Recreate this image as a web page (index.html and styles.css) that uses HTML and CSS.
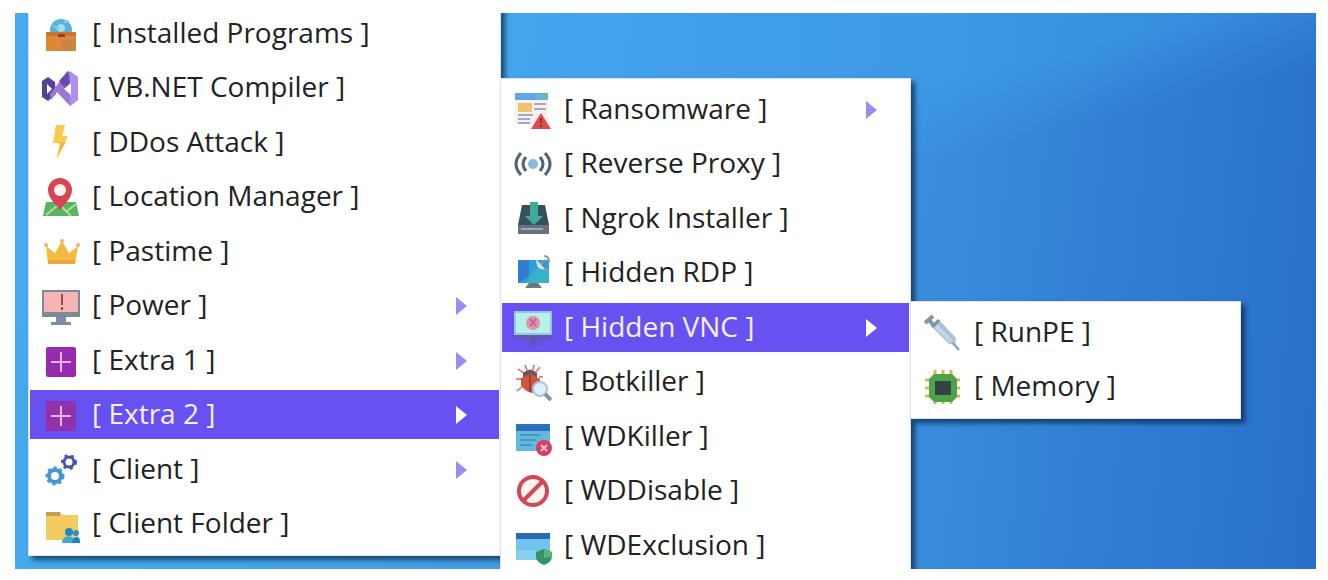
FILE: index.html
```html
<!DOCTYPE html>
<html lang="en">

<head>
    <meta charset="UTF-8">
    <title>Context menu</title>
    <link rel="stylesheet" href="styles.css">
</head>

<body>
    <div class="desktop">
        <ul class="menu menu-main">
            <li><button class="item">
                <svg class="icon" viewBox="0 0 38 38"><circle cx="19" cy="15" r="11" fill="#55b4d6"/><circle cx="19" cy="13" r="4" fill="#a5dbea"/><path d="M11 11l6 2M22 7l5-1" stroke="#8bd0e5" stroke-width="2"/><path d="M4 17h30v19H4z" fill="#dc883c"/><path d="M4 17h30v4H4z" fill="#c9762f"/><path d="M16 19h7v3h-7z" fill="#963b31"/><path d="M20 25h14v11H20z" fill="#c98641"/></svg>
                <span>[ Installed Programs ]</span></button></li>
            <li><button class="item">
                <svg class="icon" viewBox="0 0 38 38"><path d="M0 12l6-4 7 5 1 12-8 7-6-4z" fill="#574195"/><path d="M5 15v10l5-5z" fill="#fff"/><path d="M8 25L26 2l10 6v23l-8 6-13-14-6 8z" fill="#9b78d5"/><path d="M26 2l-9 10 6 7 5-5z" fill="#674bac"/><path d="M36 8v23l-8 6V2z" fill="#af91ed"/><path d="M29 14v12l-7-6z" fill="#fff"/></svg>
                <span>[ VB.NET Compiler ]</span></button></li>
            <li><button class="item">
                <svg class="icon" viewBox="0 0 38 38"><path d="M14 1h9l-3 11h6L15 34l3-15h-7z" fill="#f9cb4b"/><path d="M15 18h9l-9 16 3-14z" fill="#f2b646"/></svg>
                <span>[ DDos Attack ]</span></button></li>
            <li><button class="item">
                <svg class="icon" viewBox="0 0 38 38"><path d="M4 24h30l3 14H1z" fill="#57b565"/><path d="M4 37l13-11 12 12" fill="none" stroke="#b9dd9c" stroke-width="2"/><path d="M25 33l9-7" stroke="#b2df98" stroke-width="2"/><path d="M18 32C13 25 6 20 6 12a12 12 0 0 1 24 0c0 8-7 13-12 20z" fill="#d84452"/><circle cx="18" cy="12" r="6" fill="#fff2ef"/></svg>
                <span>[ Location Manager ]</span></button></li>
            <li><button class="item">
                <svg class="icon" viewBox="0 0 38 38"><path d="M6 31L4 13l9 7 7-12 7 12 9-7-3 18z" fill="#f4bb43"/><path d="M6 27h27v4H6z" fill="#e9a83b"/><g fill="#e6b469"><circle cx="4" cy="12" r="2"/><circle cx="20" cy="8" r="2"/><circle cx="36" cy="12" r="2"/></g></svg>
                <span>[ Pastime ]</span></button></li>
            <li><button class="item">
                <svg class="icon" viewBox="0 0 38 38"><path d="M0 3h38v27H0z" fill="#7e8996"/><path d="M2 5h34v20H2z" fill="#f7b4b5"/><path d="M14 30h10v5h5v3H9v-3h5z" fill="#778fa4"/><path d="M20 7v11M20 20v3" stroke="#96484f" stroke-width="2"/></svg>
                <span>[ Power ]</span><i class="arrow"></i></button></li>
            <li><button class="item">
                <svg class="icon" viewBox="0 0 38 38"><rect x="4" y="5" width="30" height="30" rx="2" fill="#962bb0"/><path d="M9 20h20M19 10v20" stroke="#e7b5ec" stroke-width="2"/></svg>
                <span>[ Extra 1 ]</span><i class="arrow"></i></button></li>
            <li><button class="item active">
                <svg class="icon" viewBox="0 0 38 38"><rect x="4" y="5" width="30" height="30" rx="2" fill="#9231aa"/><path d="M9 20h20M19 10v20" stroke="#e7b5ec" stroke-width="2"/></svg>
                <span>[ Extra 2 ]</span><i class="arrow"></i></button></li>
            <li><button class="item">
                <svg class="icon" viewBox="0 0 38 38"><circle cx="13" cy="25" r="6" fill="none" stroke="#4397d8" stroke-width="4"/><circle cx="13" cy="25" r="8" fill="none" stroke="#4397d8" stroke-width="3" stroke-dasharray="3 3"/><circle cx="27" cy="11" r="5" fill="none" stroke="#4854a3" stroke-width="3"/><circle cx="27" cy="11" r="7" fill="none" stroke="#4854a3" stroke-width="2" stroke-dasharray="3 4"/></svg>
                <span>[ Client ]</span><i class="arrow"></i></button></li>
            <li><button class="item">
                <svg class="icon" viewBox="0 0 38 38"><path d="M4 7h14l3 3h15v25H4z" fill="#f4cb61"/><path d="M4 7h14v4H4z" fill="#c49c58"/><circle cx="27" cy="27" r="4" fill="#2686c4"/><path d="M20 38c0-9 13-9 13 0z" fill="#44a8dc"/><circle cx="34" cy="28" r="3" fill="#358dbf"/><path d="M30 38c0-7 8-8 8-2v2z" fill="#1985bd"/></svg>
                <span>[ Client Folder ]</span></button></li>
        </ul>

        <ul class="menu menu-extra">
            <li><button class="item">
                <svg class="icon" viewBox="0 0 38 38"><path d="M1 2h33v31H1z" fill="#f5f2ee"/><path d="M1 2h33v7H1z" fill="#60a7e8"/><path d="M23 2h11v7H23z" fill="#69b4c9"/><path d="M4 12h14v9H4z" fill="#edc372"/><path d="M20 13h12M20 18h12M4 24h15M4 28h12M4 32h12" stroke="#aaa5c7" stroke-width="2"/><path d="M27 22l10 16H17z" fill="#df4a4c"/><path d="M27 27v5M27 34v2" stroke="#8d3035" stroke-width="2"/></svg>
                <span>[ Ransomware ]</span><i class="arrow"></i></button></li>
            <li><button class="item">
                <svg class="icon" viewBox="0 0 38 38"><circle cx="19" cy="19" r="5" fill="#89b9df"/><path d="M12 12q-6 7 0 14M26 12q6 7 0 14M7 8q-10 11 0 22M31 8q10 11 0 22" fill="none" stroke="#526573" stroke-width="3"/></svg>
                <span>[ Reverse Proxy ]</span></button></li>
            <li><button class="item">
                <svg class="icon" viewBox="0 0 38 38"><path d="M8 5h23l4 20v9H4v-9z" fill="#34505a"/><path d="M4 25h31v9H4z" fill="#69717e"/><path d="M7 29h22" stroke="#a2aab3" stroke-width="2"/><path d="M16 2h8v14h5l-9 9-9-9h5z" fill="#42a99f"/></svg>
                <span>[ Ngrok Installer ]</span></button></li>
            <li><button class="item">
                <svg class="icon" viewBox="0 0 38 38"><path d="M4 6h31v23H4z" fill="#2c9ddd"/><path d="M4 6h11v16l-11 7z" fill="#327cd1"/><path d="M20 15h15v14H12z" fill="#36b3c8"/><path d="M15 29h9l4 5H11z" fill="#6e7883"/><path d="M22 5l9 10q-9 2-9-10z" fill="#d9e3e6"/><path d="M27 10l4-4M30 2q5 0 5 6M31 14l3 4" fill="none" stroke="#8c9ba1" stroke-width="2"/></svg>
                <span>[ Hidden RDP ]</span></button></li>
            <li><button class="item active">
                <svg class="icon" viewBox="0 0 38 38"><path d="M0 2h38v25H0z" fill="#8bc9e5"/><path d="M2 4h34v20H2z" fill="#b6f0e8"/><circle cx="19" cy="14" r="7" fill="#df91ad"/><path d="M16 10l6 7M22 10l-6 7" stroke="#c9698f" stroke-width="2"/><path d="M0 26h38v4H0zM15 30h8v4h5v2H10v-2h5z" fill="#6257b5"/></svg>
                <span>[ Hidden VNC ]</span><i class="arrow"></i></button></li>
            <li><button class="item">
                <svg class="icon" viewBox="0 0 38 38"><path d="M10 10L4 6M8 16H2M9 23l-6 5M22 9l4-5M25 14h4M13 7l-2-5M19 7l1-5" stroke="#dd8880" stroke-width="2"/><path d="M9 10q7-7 14 0v6H9z" fill="#685b58"/><path d="M7 15l10-4 9 5-1 14q-12 2-18-8z" fill="#d5543e"/><path d="M16 12v17" stroke="#9a4138" stroke-width="2"/><circle cx="26" cy="26" r="7" fill="#deeffd" stroke="#a9c5df" stroke-width="2"/><path d="M31 31l6 6" stroke="#8194a7" stroke-width="4"/></svg>
                <span>[ Botkiller ]</span></button></li>
            <li><button class="item">
                <svg class="icon" viewBox="0 0 38 38"><path d="M2 6h34v27H2z" fill="#65b7dc"/><path d="M2 6h34v7H2z" fill="#2c70be"/><path d="M6 17h20M6 22h16M6 27h12" stroke="#4399c5" stroke-width="2"/><circle cx="30" cy="30" r="8" fill="#d4405f"/><path d="M27 27l6 6M33 27l-6 6" stroke="#f7c6ce" stroke-width="2"/></svg>
                <span>[ WDKiller ]</span></button></li>
            <li><button class="item">
                <svg class="icon" viewBox="0 0 38 38"><circle cx="19" cy="19" r="14" fill="#fff4f2" stroke="#d34855" stroke-width="4"/><path d="M9 29L29 9" stroke="#d34855" stroke-width="4"/></svg>
                <span>[ WDDisable ]</span></button></li>
            <li><button class="item">
                <svg class="icon" viewBox="0 0 38 38"><path d="M2 6h34v27H2z" fill="#71c4ee"/><path d="M2 6h34v6H2z" fill="#2a69b6"/><path d="M2 23h20v10H2z" fill="#86d0ee"/><path d="M30 22l8 3v5q-1 6-8 8-7-2-8-8v-5z" fill="#359467"/><path d="M30 22l8 3v5l-8 1z" fill="#5eb274"/></svg>
                <span>[ WDExclusion ]</span></button></li>
        </ul>

        <ul class="menu menu-vnc">
            <li><button class="item">
                <svg class="icon" viewBox="0 0 38 38"><path d="M1 9l8-7M5 6l6 7" stroke="#8198a7" stroke-width="4"/><path d="M8 13l7-7 17 18-1 7-6-1z" fill="#a9c2d7"/><path d="M12 12l15 15" stroke="#c3d6e6" stroke-width="4"/><path d="M8 13l7-7" stroke="#7194b2" stroke-width="3"/><path d="M29 29l6 7" stroke="#849aaa" stroke-width="2"/></svg>
                <span>[ RunPE ]</span></button></li>
            <li><button class="item">
                <svg class="icon" viewBox="0 0 38 38"><path d="M11 2v34M19 2v34M27 2v34M1 12h35M1 20h35M1 28h35" stroke="#dfb64e" stroke-width="3"/><path d="M10 6h18l5 5v18l-5 5H10l-5-5V11z" fill="#4ba445"/><path d="M11 13h16v14H11z" fill="#354343"/></svg>
                <span>[ Memory ]</span></button></li>
        </ul>
    </div>
</body>

</html>
```
FILE: styles.css
```css
* {
    box-sizing: border-box;
}

body {
    height: 100vh;
    margin: 0;
    padding: 13px 12px 11px 15px;
    background: #fff;
    font-family: "Open Sans", "Noto Sans", sans-serif;
}

/* wallpaper: a light ray over the top left of the blue */
.desktop {
    position: relative;
    height: 100%;
    overflow: hidden;
    background:
        linear-gradient(166deg, rgba(70, 175, 245, .35) 34%, rgba(70, 175, 245, 0) 43%),
        linear-gradient(95deg, #45abec 0%, #429fe8 38%, #398cdc 70%, #2f7cd4 86%, #296fca 100%);
}

.menu {
    position: absolute;
    margin: 0;
    padding: 6px 1px 7px;
    list-style: none;
    background: #fff;
    border: 1px solid #e4e0ee;
    box-shadow: 4px 4px 5px rgba(0, 25, 50, .65);
}

.menu-main {
    left: 13px;
    bottom: 13px;
    width: 473px;
}

.menu-extra {
    left: 485px;
    top: 65px;
    width: 411px;
}

.menu-vnc {
    left: 895px;
    top: 288px;
    width: 331px;
}

/* rows sit 5px and 6px apart in turn */
.menu li {
    margin-bottom: 5px;
}

.menu li:nth-child(even) {
    margin-bottom: 6px;
}

.menu li:last-child {
    margin-bottom: 0;
}

.item {
    display: flex;
    align-items: center;
    gap: 12px;
    width: 100%;
    height: 49px;
    padding: 0 32px 0 12px;
    border: 0;
    background: none;
    color: #222;
    font-family: inherit;
    font-size: 28px;
    line-height: 36px;
    white-space: nowrap;
    text-align: left;
}

.item span {
    padding-bottom: 4px;
}

.item.active {
    background: #6751f1;
    color: #f6f0ff;
}

.icon {
    flex: none;
    width: 38px;
    height: 38px;
}

.arrow {
    margin-left: auto;
    border: solid transparent;
    border-width: 9px 0 9px 11px;
    border-left-color: #9a8cf0;
}

.active .arrow {
    border-left-color: #fff;
}
```
